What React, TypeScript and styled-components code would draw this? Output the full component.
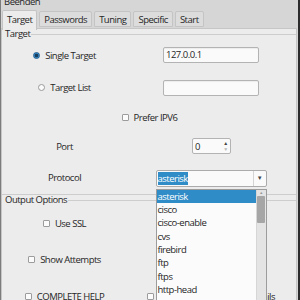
import React from "react";
import styled, { createGlobalStyle } from "styled-components";

const protocols = [
  "asterisk",
  "cisco",
  "cisco-enable",
  "cvs",
  "firebird",
  "ftp",
  "ftps",
  "http-head",
  "http-get",
  "http-post",
];

const tabs = ["Target", "Passwords", "Tuning", "Specific", "Start"];

const App = () => {
  return (
    <>
      <GlobalStyle />
      <Window>
        <MenuBar>Beenden</MenuBar>
        <TabBar>
          {tabs.map((t, i) => (
            <Tab key={t} $active={i === 0}>
              {t}
            </Tab>
          ))}
        </TabBar>
        <Panel>
          <GroupHeader>
            <GroupTitle>Target</GroupTitle>
            <Rule />
          </GroupHeader>
          <TargetGrid>
            <Option>
              <Radio $checked />
              Single Target
            </Option>
            <TextInput>127.0.0.1</TextInput>

            <Option>
              <Radio />
              Target List
            </Option>
            <TextInput />

            <Option $span>
              <Check />
              Prefer IPV6
            </Option>

            <FieldLabel>Port</FieldLabel>
            <SpinBox>
              <span>0</span>
              <SpinArrows>
                <Arrow>▲</Arrow>
                <Arrow $faded>▼</Arrow>
              </SpinArrows>
            </SpinBox>

            <FieldLabel>Protocol</FieldLabel>
            <ComboWrap>
              <Combo>
                <ComboText>
                  <Selected>asterisk</Selected>
                </ComboText>
                <ComboButton>▼</ComboButton>
              </Combo>
              <Popup>
                <PopupList>
                  {protocols.map((p, i) => (
                    <PopupItem key={p} $active={i === 0}>
                      {p}
                    </PopupItem>
                  ))}
                </PopupList>
                <ScrollBar>
                  <ScrollUp>▲</ScrollUp>
                  <ScrollThumb />
                </ScrollBar>
              </Popup>
            </ComboWrap>
          </TargetGrid>

          <GroupHeader>
            <GroupTitle>Output Options</GroupTitle>
            <Rule />
          </GroupHeader>
          <OutputGrid>
            <Option>
              <Check />
              Use SSL
            </Option>
            <span />
            <Option>
              <Check />
              Show Attempts
            </Option>
            <span />
            <Option>
              <Check />
              COMPLETE HELP
            </Option>
            <Option>
              <Check />
              Service Module Usage Details
            </Option>
          </OutputGrid>
        </Panel>
      </Window>
    </>
  );
};

const GlobalStyle = createGlobalStyle`
  html, body {
    margin: 0;
    padding: 0;
  }
  body {
    width: 300px;
    height: 300px;
    overflow: hidden;
    background: #2c2c2c;
    font-family: "Open Sans", "Noto Sans", sans-serif;
    font-size: 9.5px;
    letter-spacing: -0.5px;
    color: #262626;
  }
`;

const Window = styled.div`
  width: 297px;
  height: 300px;
  background: #d6d6d6;
  border-left: 1px solid #7c7c7c;
  display: flex;
  flex-direction: column;
  overflow: hidden;
`;

const MenuBar = styled.div`
  height: 10px;
  line-height: 4px;
  padding-left: 3px;
  flex-shrink: 0;
`;

const TabBar = styled.div`
  height: 18px;
  display: flex;
  align-items: center;
  gap: 2px;
  padding-left: 1px;
  flex-shrink: 0;
`;

const Tab = styled.div<{ $active?: boolean }>`
  height: ${(p) => (p.$active ? "20px" : "16px")};
  line-height: ${(p) => (p.$active ? "18px" : "16px")};
  padding: 0 4px;
  box-sizing: border-box;
  border: 1px solid #c4c4c4;
  border-bottom: ${(p) => (p.$active ? "none" : "1px solid #c4c4c4")};
  border-radius: 2px 2px 0 0;
  background: ${(p) => (p.$active ? "#ececec" : "#dcdcdc")};
  position: relative;
  z-index: ${(p) => (p.$active ? 2 : 0)};
  margin-top: ${(p) => (p.$active ? "2px" : "0")};
`;

const Panel = styled.div`
  flex: 1;
  margin-right: 1px;
  background: #ececec;
  border: 1px solid #c6c6c6;
  position: relative;
  z-index: 1;
`;

const GroupHeader = styled.div`
  height: 11px;
  margin-top: -1px;
  display: flex;
  align-items: center;
  padding-left: 3px;
  gap: 1px;
  & + & {
    margin-top: 1px;
  }
`;

const GroupTitle = styled.span`
  white-space: nowrap;
`;

const Rule = styled.div`
  flex: 1;
  border-top: 1px solid #cdcdcd;
  margin-top: 1px;
`;

const TargetGrid = styled.div`
  display: grid;
  grid-template-columns: 123px 1fr;
  grid-template-rows: 32px 33px 27px 30px 33px;
  align-items: center;
  justify-items: center;
  padding-left: 1px;
  border-bottom: 1px solid #cdcdcd;
`;

const OutputGrid = styled.div`
  display: grid;
  grid-template-columns: 123px 1fr;
  grid-template-rows: 36px 37px 36px;
  align-items: center;
  justify-items: center;
  padding-left: 1px;
`;

const Option = styled.label<{ $span?: boolean }>`
  display: flex;
  align-items: center;
  gap: 5px;
  white-space: nowrap;
  grid-column: ${(p) => (p.$span ? "1 / -1" : "auto")};
`;

const Radio = styled.span<{ $checked?: boolean }>`
  width: 7px;
  height: 7px;
  border-radius: 50%;
  box-sizing: border-box;
  border: 1px solid ${(p) => (p.$checked ? "#1f5d8e" : "#9a9a9a")};
  background: ${(p) =>
    p.$checked
      ? "radial-gradient(circle, #163f60 0 1.6px, #3a8fd0 2.2px)"
      : "#fbfbfb"};
`;

const Check = styled.span`
  width: 7px;
  height: 7px;
  box-sizing: border-box;
  border: 1px solid #9c9c9c;
  border-radius: 1px;
  background: #fbfbfb;
`;

const FieldLabel = styled.span``;

const TextInput = styled.div`
  width: 96px;
  height: 16px;
  box-sizing: border-box;
  border: 1px solid #b3b3b3;
  border-radius: 2px;
  background: #fafafa;
  box-shadow: inset 0 1px 1px rgba(0, 0, 0, 0.06);
  line-height: 14px;
  padding-left: 2px;
`;

const SpinBox = styled.div`
  width: 39px;
  height: 16px;
  box-sizing: border-box;
  border: 1px solid #b3b3b3;
  border-radius: 2px;
  background: #fafafa;
  display: flex;
  align-items: center;
  justify-content: space-between;
  padding-left: 2px;
  margin-left: 1px;
`;

const SpinArrows = styled.div`
  width: 9px;
  height: 100%;
  display: flex;
  flex-direction: column;
  align-items: center;
  justify-content: center;
`;

const Arrow = styled.span<{ $faded?: boolean }>`
  font-size: 5px;
  line-height: 6px;
  color: ${(p) => (p.$faded ? "#b8b8b8" : "#444")};
`;

const ComboWrap = styled.div`
  position: relative;
  width: 111px;
  height: 17px;
  margin-top: 1px;
`;

const Combo = styled.div`
  height: 100%;
  box-sizing: border-box;
  border: 1px solid #ababab;
  border-radius: 2px;
  background: #fafafa;
  display: flex;
`;

const ComboText = styled.div`
  flex: 1;
  display: flex;
  align-items: center;
  padding-left: 1px;
`;

const Selected = styled.span`
  background: #308cc6;
  color: #fff;
  line-height: 13px;
`;

const ComboButton = styled.div`
  width: 12px;
  border-left: 1px solid #d4d4d4;
  font-size: 6px;
  color: #444;
  display: flex;
  align-items: center;
  justify-content: center;
`;

const Popup = styled.div`
  position: absolute;
  left: 0;
  top: 19px;
  width: 111px;
  height: 120px;
  box-sizing: border-box;
  border: 1px solid #9c9c9c;
  background: #fbfbfb;
  display: flex;
  z-index: 5;
`;

const PopupList = styled.div`
  flex: 1;
  overflow: hidden;
`;

const PopupItem = styled.div<{ $active?: boolean }>`
  height: 13.4px;
  line-height: 13.4px;
  padding-left: 1px;
  background: ${(p) => (p.$active ? "#308cc6" : "transparent")};
  color: ${(p) => (p.$active ? "#fff" : "#262626")};
`;

const ScrollBar = styled.div`
  width: 9px;
  background: #e4e4e4;
  border-left: 1px solid #d6d6d6;
  display: flex;
  flex-direction: column;
  align-items: center;
`;

const ScrollUp = styled.span`
  font-size: 4px;
  line-height: 6px;
  color: #9a9a9a;
`;

const ScrollThumb = styled.div`
  width: 8px;
  height: 27px;
  background: #a6a6a6;
  border-radius: 1px;
`;

export default App;
